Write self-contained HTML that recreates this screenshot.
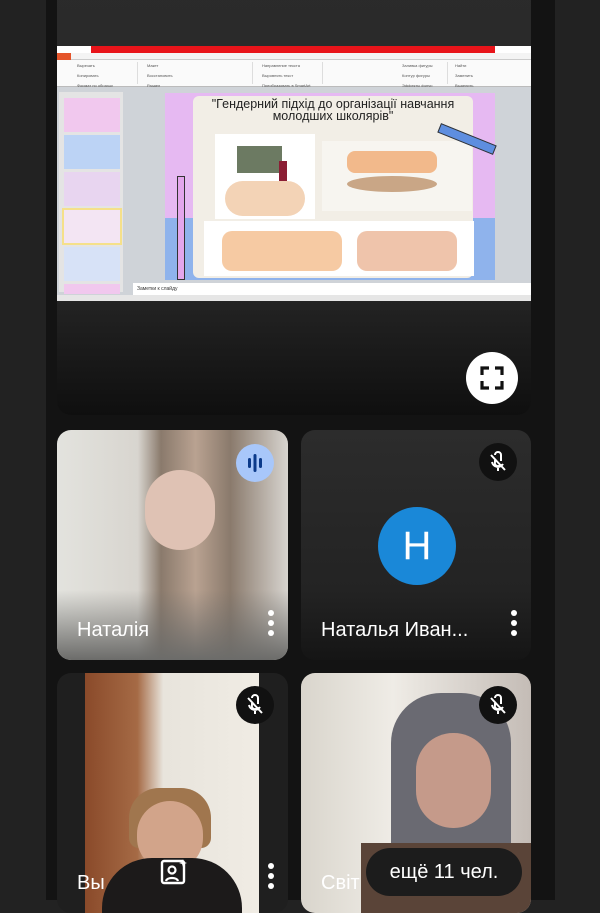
<!DOCTYPE html>
<html><head><meta charset="utf-8">
<style>
*{margin:0;padding:0;box-sizing:border-box}
body{width:600px;height:900px;background:#222;position:relative;overflow:hidden;font-family:"Liberation Sans",sans-serif}
.col{position:absolute;left:46px;top:0;width:509px;height:900px;background:#131313}
.main{position:absolute;left:57px;top:-20px;width:474px;height:435px;border-radius:14px;background:linear-gradient(#2b2b2b 0%,#262626 70%,#0f0f0f 100%)}
.scr{position:absolute;left:57px;top:46px;width:474px;height:255px;background:#d8d8d8;overflow:hidden}
.abs{position:absolute}
.tile{position:absolute;border-radius:14px;overflow:hidden}
.name{position:absolute;color:#fff;font-size:20px;bottom:18px;left:20px}
.dots{position:absolute;width:6px;right:14px;bottom:20px}
.dots i{display:block;width:6px;height:6px;border-radius:3px;background:#fff;margin-bottom:4px}
.rb{position:absolute;font-size:4px;color:#555}
</style></head><body>
<div class="col"></div>
<div class="main"></div>
<div class="scr">
  <div class="abs" style="left:0;top:0;width:474px;height:7px;background:#fff"></div>
  <div class="abs" style="left:34px;top:0;width:404px;height:7px;background:#e8141a"></div>
  <div class="abs" style="left:0;top:7px;width:474px;height:7px;background:#f4f4f4;border-bottom:1px solid #ccc"></div>
  <div class="abs" style="left:0;top:7px;width:14px;height:7px;background:#e5552b"></div>
  <div class="abs" style="left:0;top:14px;width:474px;height:27px;background:#fafafa;border-bottom:1px solid #bbb"></div>
  <div class="rb" style="left:20px;top:17px">Вырезать<br><br>Копировать<br><br>Формат по образцу</div>
  <div class="rb" style="left:90px;top:17px">Макет<br><br>Восстановить<br><br>Раздел</div>
  <div class="rb" style="left:205px;top:17px">Направление текста<br><br>Выровнять текст<br><br>Преобразовать в SmartArt</div>
  <div class="rb" style="left:345px;top:17px">Заливка фигуры<br><br>Контур фигуры<br><br>Эффекты фигур</div>
  <div class="rb" style="left:398px;top:17px">Найти<br><br>Заменить<br><br>Выделить</div>
  <div class="abs" style="left:80px;top:16px;width:1px;height:22px;background:#ddd"></div>
  <div class="abs" style="left:195px;top:16px;width:1px;height:22px;background:#ddd"></div>
  <div class="abs" style="left:265px;top:16px;width:1px;height:22px;background:#ddd"></div>
  <div class="abs" style="left:390px;top:16px;width:1px;height:22px;background:#ddd"></div>
  <div class="abs" style="left:0;top:41px;width:474px;height:208px;background:#cfd3d8"></div>
  <div class="abs" style="left:2px;top:46px;width:64px;height:200px;background:#e4e4e4"></div>
  <div class="abs" style="left:7px;top:52px;width:56px;height:34px;background:#f1c8ee"></div>
  <div class="abs" style="left:7px;top:89px;width:56px;height:34px;background:#bcd3f5"></div>
  <div class="abs" style="left:7px;top:126px;width:56px;height:34px;background:#e8d5f0"></div>
  <div class="abs" style="left:5px;top:162px;width:60px;height:37px;background:#f5e08a"></div>
  <div class="abs" style="left:7px;top:164px;width:56px;height:33px;background:#f3e5f3"></div>
  <div class="abs" style="left:7px;top:201px;width:56px;height:34px;background:#d7e2f7"></div>
  <div class="abs" style="left:7px;top:238px;width:56px;height:10px;background:#f1c8ee"></div>
  <div class="abs" style="left:108px;top:47px;width:330px;height:187px;background:#e6b9f2"></div>
  <div class="abs" style="left:108px;top:172px;width:330px;height:62px;background:#8fb3ec"></div>
  <div class="abs" style="left:136px;top:50px;width:280px;height:182px;background:#f2eee6;border-radius:6px"></div>
  <div class="abs" style="left:126px;top:52px;width:300px;text-align:center;font-size:12.5px;line-height:12px;color:#222">"Гендерний підхід до організації навчання<br>молодших школярів"</div>
  <div class="abs" style="left:158px;top:88px;width:100px;height:85px;background:#fff"></div>
  <div class="abs" style="left:180px;top:100px;width:45px;height:27px;background:#6c7a62"></div>
  <div class="abs" style="left:222px;top:115px;width:8px;height:30px;background:#8b1e34"></div>
  <div class="abs" style="left:168px;top:135px;width:80px;height:35px;background:#f3d3b6;border-radius:40px"></div>
  <div class="abs" style="left:265px;top:95px;width:150px;height:70px;background:#f7f5f0"></div>
  <div class="abs" style="left:290px;top:130px;width:90px;height:16px;background:#c9a686;border-radius:50%"></div>
  <div class="abs" style="left:290px;top:105px;width:90px;height:22px;background:#f0a060;border-radius:8px;opacity:.7"></div>
  <div class="abs" style="left:147px;top:175px;width:270px;height:55px;background:#fff"></div>
  <div class="abs" style="left:165px;top:185px;width:120px;height:40px;background:#f2b37c;border-radius:10px;opacity:.7"></div>
  <div class="abs" style="left:300px;top:185px;width:100px;height:40px;background:#e59d73;border-radius:10px;opacity:.6"></div>
  <div class="abs" style="left:120px;top:130px;width:8px;height:104px;background:#e3a6ec;border:1px solid #333"></div>
  <div class="abs" style="left:380px;top:88px;width:60px;height:10px;background:#5e8ee0;transform:rotate(22deg);border:1px solid #333"></div>
  <div class="abs" style="left:76px;top:237px;width:400px;height:12px;background:#fff;font-size:5px;padding:3px 4px;color:#333">Заметки к слайду</div>
  <div class="abs" style="left:0;top:249px;width:474px;height:6px;background:#e6e6e6"></div>
</div>
<div class="abs" style="left:466px;top:352px;width:52px;height:52px;border-radius:26px;background:#fff">
<svg width="52" height="52" viewBox="0 0 52 52"><path d="M16 23v-7h7M29 16h7v7M36 29v7h-7M23 36h-7v-7" stroke="#111" stroke-width="3.2" fill="none"/></svg></div>

<div class="tile" style="left:57px;top:430px;width:231px;height:230px;background:linear-gradient(90deg,#e3e3de 0%,#d8d5cf 35%,#8a7a6c 45%,#b9a291 60%,#8a7a6c 75%,#d7d4cf 100%)">
  <div class="abs" style="left:88px;top:40px;width:70px;height:80px;border-radius:35px;background:#dfc2b4"></div>
  <div class="abs" style="left:0;top:160px;width:231px;height:70px;background:linear-gradient(transparent,#6c6c6a)"></div>
  <div class="abs" style="right:14px;top:14px;width:38px;height:38px;border-radius:19px;background:#a8c7fa">
   <svg width="38" height="38"><rect x="12" y="14" width="3" height="10" rx="1.5" fill="#0b3a8a"/><rect x="17.5" y="10" width="3" height="18" rx="1.5" fill="#0b3a8a"/><rect x="23" y="14" width="3" height="10" rx="1.5" fill="#0b3a8a"/></svg></div>
  <div class="name">Наталія</div>
  <div class="dots"><i></i><i></i><i></i></div>
</div>

<div class="tile" style="left:301px;top:430px;width:230px;height:230px;background:linear-gradient(#2c2c2c,#232323 70%,#151515)">
  <div class="abs" style="left:77px;top:77px;width:78px;height:78px;border-radius:39px;background:#1a88d8;color:#fff;font-size:40px;text-align:center;line-height:78px">H</div>
  <div class="name">Наталья Иван...</div>
  <div class="dots"><i></i><i></i><i></i></div>
</div>

<div class="tile" style="left:57px;top:673px;width:231px;height:240px;background:#1f1f1f">
  <div class="abs" style="left:28px;top:0;width:174px;height:240px;background:linear-gradient(90deg,#8a4a2a 0%,#a56a45 30%,#e8e4dc 45%,#f0ece4 100%)"></div>
  <div class="abs" style="left:72px;top:115px;width:82px;height:60px;border-radius:30px 30px 10px 10px;background:#a0764e"></div>
  <div class="abs" style="left:80px;top:128px;width:66px;height:70px;border-radius:33px;background:#d2a48a"></div>
  <div class="abs" style="left:45px;top:185px;width:140px;height:60px;border-radius:50px 50px 0 0;background:#1c1a1a"></div>
  <div class="name">Вы</div>
  <svg class="abs" style="left:102px;top:184px" width="30" height="30" viewBox="0 0 30 30"><rect x="3" y="4" width="22" height="22" rx="2" stroke="#fff" stroke-width="2.4" fill="none"/><circle cx="13" cy="13" r="3.5" stroke="#fff" stroke-width="2.2" fill="none"/><path d="M7 24c1-4 11-4 12 0" stroke="#fff" stroke-width="2.2" fill="none"/><path d="M24 2l1 3 3 1-3 1-1 3-1-3-3-1 3-1z" fill="#fff"/></svg>
  <div class="dots"><i></i><i></i><i></i></div>
</div>

<div class="tile" style="left:301px;top:673px;width:230px;height:240px;background:linear-gradient(90deg,#d9d5cc,#efece6 40%,#c4bcb6 100%)">
  <div class="abs" style="left:90px;top:20px;width:120px;height:200px;border-radius:50px;background:#6a6a72"></div>
  <div class="abs" style="left:115px;top:60px;width:75px;height:95px;border-radius:37px;background:#c59a8a"></div>
  <div class="abs" style="left:60px;top:170px;width:170px;height:70px;background:#5a4438"></div>
  <div class="name">Світ</div>
</div>
<div class="abs" style="left:366px;top:848px;width:156px;height:48px;border-radius:24px;background:#1c1c1c;color:#fff;font-size:20px;text-align:center;line-height:48px">ещё 11 чел.</div>

<svg style="position:absolute;left:479px;top:443px" width="38" height="38"><circle cx="19" cy="19" r="19" fill="#111"/><path d="M16 12a3 3 0 0 1 6 0v6M22 21a3 3 0 0 1-6-2v-2M13 19a6 6 0 0 0 11 2M19 25v3M12 12l14 15" stroke="#fff" stroke-width="2" fill="none"/></svg>
<svg style="position:absolute;left:236px;top:686px" width="38" height="38"><circle cx="19" cy="19" r="19" fill="#111"/><path d="M16 12a3 3 0 0 1 6 0v6M22 21a3 3 0 0 1-6-2v-2M13 19a6 6 0 0 0 11 2M19 25v3M12 12l14 15" stroke="#fff" stroke-width="2" fill="none"/></svg>
<svg style="position:absolute;left:479px;top:686px" width="38" height="38"><circle cx="19" cy="19" r="19" fill="#111"/><path d="M16 12a3 3 0 0 1 6 0v6M22 21a3 3 0 0 1-6-2v-2M13 19a6 6 0 0 0 11 2M19 25v3M12 12l14 15" stroke="#fff" stroke-width="2" fill="none"/></svg>
</body></html>
